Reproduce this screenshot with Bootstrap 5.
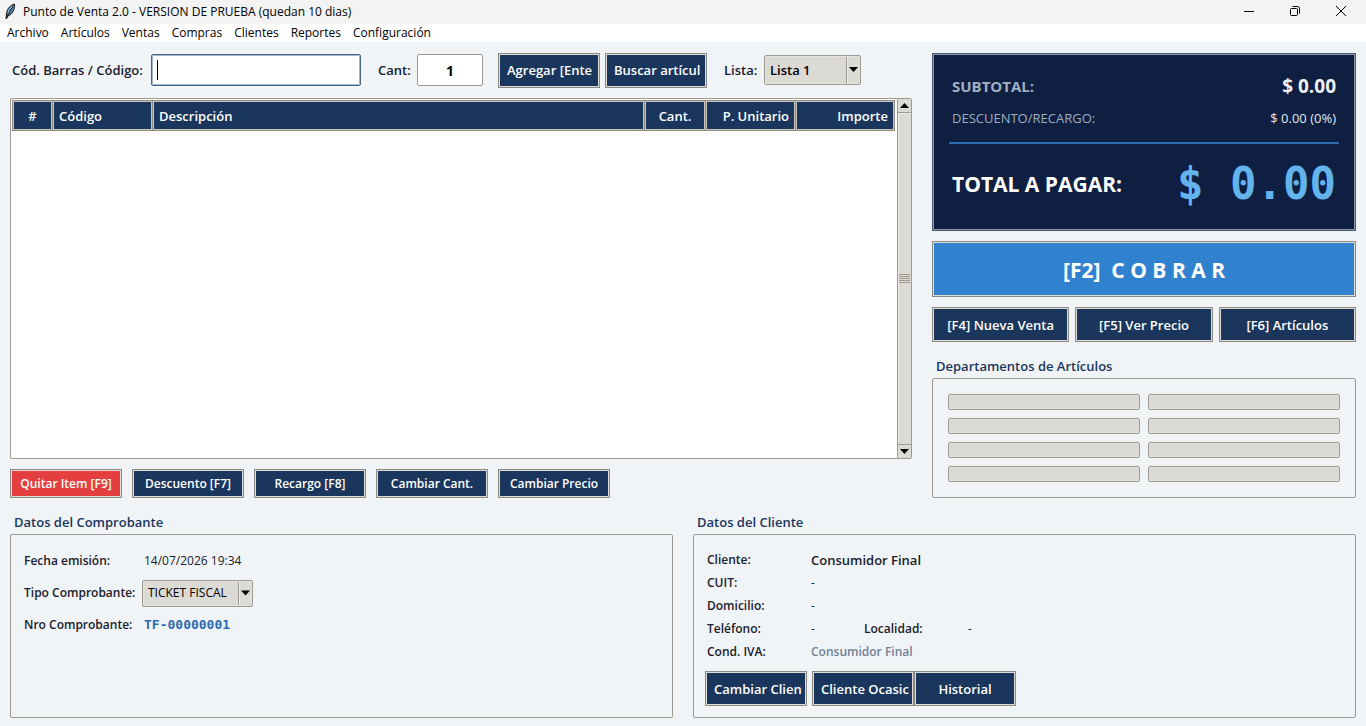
<!DOCTYPE html>
<html lang="es">
<head>
<meta charset="utf-8">
<meta name="viewport" content="width=device-width, initial-scale=1">
<title>Punto de Venta 2.0</title>
<link href="https://cdn.jsdelivr.net/npm/bootstrap@5.3.0/dist/css/bootstrap.min.css" rel="stylesheet">
<style>
:root { --navy: #1a365d; --edge: #9e9a91; --face: #dcdad5; --light: #eeebe7; }
body { font: 400 12px/16px "Open Sans", "Noto Sans", sans-serif; background: #f0f4f7; color: #1a202c; }
.strong13 { font-size: 13px; font-weight: 600; line-height: 18px; }
.strong12 { font-size: 12px; font-weight: 600; }

/* window chrome */
.titlebar { background: #f3f3f3; height: 24px; padding: 0 2px 0 4px; color: #000; }
.titlebar button { width: 46px; height: 24px; border: 0; background: none; padding: 0 0 4px; }
.caption { margin-left: 5px; }
.menubar { background: #fff; height: 18px; padding: 0 7px; gap: 12px; }
.menubar a { color: #000; text-decoration: none; line-height: 18px; }

/* push buttons */
.key { font-size: 13px; font-weight: 600; line-height: 18px; color: #fff; background: var(--navy); border: 1px solid #8d8a84; border-radius: 0; box-shadow: inset 0 0 0 1px #dedbd6; padding: 0 8px; height: 35px; overflow: hidden; white-space: nowrap; }
.key:hover { background: #2a4a7f; }
.key-small { font-size: 12px; width: 112px; height: 29px; padding: 0 2px; }
.key-wide { width: 102px; }
.key-long { padding-right: 2px; text-align: left; }
.key-red { background: #e53e3e; }
.key-pay { background: #3182ce; font-size: 21px; font-weight: 700; height: 56px; padding-top: 2px; margin-top: 10px; white-space: pre; }

/* entry fields */
.field { height: 32px; border: 1px solid var(--edge); border-radius: 2px; background: #fff; color: #000; }
.field-code { width: 210px; border-color: #4a6984; outline: 1px solid #9fb4c8; outline-offset: -2px; padding: 0 5px; font-size: 17px; caret-color: transparent; background: #fff linear-gradient(#000, #000) 5px center / 1px 20px no-repeat; }
.field-qty { width: 66px; text-align: center; font-weight: 700; font-size: 14px; }
.combo { border: 1px solid var(--edge); border-radius: 2px; color: #000; appearance: none; padding: 0 18px 0 5px; background: var(--face) url("data:image/svg+xml,%3Csvg xmlns='http://www.w3.org/2000/svg' width='14' height='28'%3E%3Cpath d='M.5 0V28' stroke='%239e9a91'/%3E%3Cpath d='M1.500 0V28' stroke='%23eeebe7'/%3E%3Cpath d='M3 11H12L7.500 16Z'/%3E%3C/svg%3E") no-repeat right center; box-shadow: inset 0 0 0 1px #e6e3de; }
.combo-list { width: 97px; height: 30px; font-size: 13px; font-weight: 600; }
.combo-type { width: 111px; height: 27px; font-size: 12px; }
.entry { padding-left: 2px; height: 34px; }
.code-label { width: 139px; white-space: nowrap; }
.qty-label { margin-left: 17px; width: 39px; }
.add-key { margin-left: 15px; }
.find-key { margin-left: 5px; }
.list-label { margin-left: 17px; width: 40px; }

/* item grid */
.desk { padding: 11px 10px 8px; }
.work { gap: 20px; }
.items-area { margin-top: 11px; min-height: 160px; }
.grid-frame { border: 1px solid var(--edge); border-right: 0; border-radius: 2px 0 0 2px; background: #fff; padding: 1px 2px 0 1px; }
.items { table-layout: fixed; border-collapse: separate; border-spacing: 1px; width: 100%; }
.items th { background: var(--navy); color: #fff; font-size: 13px; font-weight: 600; line-height: 18px; height: 29px; padding: 0 5px; border: 1px solid #c9c5bd; outline: 1px solid #8f8b83; white-space: nowrap; }
.vbar { width: 15px; border: 1px solid var(--edge); border-radius: 0 2px 2px 0; background: var(--face); }
.vbar button { height: 14px; padding: 0; border: 0; background: var(--face); line-height: 0; }
.vbar button:first-child { border-bottom: 1px solid var(--edge); }
.vbar button:last-child { border-top: 1px solid var(--edge); }
.thumb { box-shadow: inset 1px 1px var(--light); }
.actions { margin-top: 10px; gap: 10px; }

/* totals and departments */
.side { width: 424px; }
.totals { background: #0f1f41; border: 1px solid #4b5a73; box-shadow: inset 0 0 0 1px #8c96a5; height: 178px; padding: 20px 16px 0; }
.totals dt, .totals dd { margin: 0; padding: 0 3px; }
.totals .sub-label { font-size: 15px; font-weight: 700; line-height: 24px; color: #a0aec0; }
.totals .sub-value { font-size: 19px; font-weight: 700; line-height: 24px; color: #edf2f7; }
.totals .adj-label { font-size: 13px; font-weight: 400; line-height: 18px; color: #a0aec0; }
.totals .adj-value { font-size: 13px; line-height: 18px; color: #e2e8f0; }
.adj-row { padding: 11px 0 15px; }
.rule { height: 2px; background: #2b6cb0; }
.totals .sum-label { font-size: 21px; font-weight: 700; line-height: 28px; color: #fff; }
.totals .sum-value { font: 700 44px/54px "DejaVu Sans Mono", monospace; color: #63b3ed; }
.sum-row { padding-top: 13px; }
.quick { margin: 10px 0 14px; gap: 6px; }
.quick .key { flex: 1 1 0; }
.group-title { font-size: 13px; font-weight: 600; line-height: 20px; color: var(--navy); margin: 0 4px 2px; }
.group-box { border: 1px solid var(--edge); border-radius: 2px; }
.depts { display: grid; grid-template-columns: 1fr 1fr; gap: 8px; padding: 15px; }
.depts button { height: 16px; padding: 0; background: #dadad5; border: 1px solid var(--edge); border-radius: 2px; box-shadow: inset 0 0 0 1px #e3e0db; }

/* receipt and customer */
.lower { gap: 20px; margin-top: 14px; }
.half { flex: 1 1 0; min-width: 0; }
.panel { height: 184px; }
.receipt { display: grid; grid-template-columns: 118px auto; justify-content: start; align-items: center; grid-template-rows: 32px 32px 32px; padding: 10px 13px; }
.receipt span:nth-child(even) { padding-left: 2px; }
.mono { font: 700 13px/18px "DejaVu Sans Mono", monospace; color: #2b6cb0; }
.client { padding: 13px 11px 11px; }
.customer { display: grid; grid-template-columns: 104px 53px 104px auto; justify-content: start; align-items: center; grid-auto-rows: 23px; padding-left: 2px; }
.span-rest { grid-column: span 3; }
.muted { color: #718096; }
.client-keys { gap: 5px; margin-top: 8px; }
</style>
</head>
<body class="d-flex flex-column min-vh-100">
<header>
  <div class="titlebar d-flex align-items-center">
    <svg width="14" height="18" viewBox="0 0 14 18" aria-hidden="true"><path d="M10.500 1C6.500 2 3 5.500 2.500 11L2 15.500 4 13C8.500 11.500 11 6 10.500 1Z" fill="#4d82b4" stroke="#111" stroke-width="1"/><path d="M9 3.500C6.500 6.500 4 10.500 2.500 16" fill="none" stroke="#111"/><path d="M8 3.500C5.500 5.500 4.500 7.500 4 10" fill="none" stroke="#a8cdec"/></svg>
    <span class="caption flex-grow-1">Punto de Venta 2.0 - VERSION DE PRUEBA (quedan 10 dias)</span>
    <button type="button" aria-label="Minimizar"><svg width="12" height="12" viewBox="0 0 12 12"><path d="M1 6.500H11" stroke="#000"/></svg></button>
    <button type="button" aria-label="Restaurar"><svg width="12" height="12" viewBox="0 0 12 12" fill="none" stroke="#000"><rect x="1.500" y="3.500" width="7" height="7" rx="1"/><path d="M3.500 1.500H8.500Q10.500 1.500 10.500 3.500V8.500"/></svg></button>
    <button type="button" aria-label="Cerrar"><svg width="12" height="12" viewBox="0 0 12 12"><path d="M1 1L11 11M11 1L1 11" stroke="#000"/></svg></button>
  </div>
  <nav class="menubar d-flex">
    <a href="#">Archivo</a><a href="#">Artículos</a><a href="#">Ventas</a><a href="#">Compras</a><a href="#">Clientes</a><a href="#">Reportes</a><a href="#">Configuración</a>
  </nav>
</header>

<main class="desk flex-grow-1 d-flex flex-column">
  <div class="work flex-grow-1 d-flex">
    <section class="flex-grow-1 d-flex flex-column">
      <form class="entry d-flex align-items-center">
        <label for="code" class="strong13 code-label">Cód. Barras / Código:</label>
        <input id="code" class="field field-code" type="text" autocomplete="off">
        <label for="qty" class="strong13 qty-label">Cant:</label>
        <input id="qty" class="field field-qty" type="text" value="1">
        <button type="button" class="key key-wide key-long add-key">Agregar [Ente</button>
        <button type="button" class="key key-wide key-long find-key">Buscar artícul</button>
        <label for="list" class="strong13 list-label">Lista:</label>
        <select id="list" class="combo combo-list"><option>Lista 1</option></select>
      </form>
      <div class="items-area d-flex flex-grow-1">
        <div class="grid-frame flex-grow-1">
          <table class="items">
            <colgroup><col style="width:39px"><col style="width:99px"><col><col style="width:60px"><col style="width:89px"><col style="width:98px"></colgroup>
            <thead><tr><th class="text-center">#</th><th>Código</th><th>Descripción</th><th class="text-center">Cant.</th><th class="text-end">P. Unitario</th><th class="text-end">Importe</th></tr></thead>
            <tbody></tbody>
          </table>
        </div>
        <div class="vbar d-flex flex-column">
          <button type="button" aria-label="Subir"><svg width="13" height="13"><path d="M2 9H11L6.500 4Z"/></svg></button>
          <div class="thumb flex-grow-1 d-flex align-items-center justify-content-center"><svg width="11" height="9" stroke="#9e9a91"><path d="M0 .5H11M0 2.500H11M0 4.500H11M0 6.500H11M0 8.500H11"/></svg></div>
          <button type="button" aria-label="Bajar"><svg width="13" height="13"><path d="M2 4H11L6.500 9Z"/></svg></button>
        </div>
      </div>
      <div class="actions d-flex">
        <button type="button" class="key key-small key-red">Quitar Item [F9]</button>
        <button type="button" class="key key-small">Descuento [F7]</button>
        <button type="button" class="key key-small">Recargo [F8]</button>
        <button type="button" class="key key-small">Cambiar Cant.</button>
        <button type="button" class="key key-small">Cambiar Precio</button>
      </div>
    </section>

    <aside class="side d-flex flex-column flex-shrink-0">
      <dl class="totals mb-0">
        <div class="d-flex justify-content-between"><dt class="sub-label">SUBTOTAL:</dt><dd class="sub-value">$ 0.00</dd></div>
        <div class="adj-row d-flex justify-content-between"><dt class="adj-label">DESCUENTO/RECARGO:</dt><dd class="adj-value">$ 0.00 (0%)</dd></div>
        <div class="rule"></div>
        <div class="sum-row d-flex justify-content-between align-items-center"><dt class="sum-label">TOTAL A PAGAR:</dt><dd class="sum-value">$ 0.00</dd></div>
      </dl>
      <button type="button" class="key key-pay">[F2]  C O B R A R</button>
      <div class="quick d-flex">
        <button type="button" class="key">[F4] Nueva Venta</button>
        <button type="button" class="key">[F5] Ver Precio</button>
        <button type="button" class="key">[F6] Artículos</button>
      </div>
      <h2 class="group-title">Departamentos de Artículos</h2>
      <div class="group-box depts flex-grow-1 align-content-start">
        <button type="button" aria-label="Departamento 1"></button><button type="button" aria-label="Departamento 2"></button>
        <button type="button" aria-label="Departamento 3"></button><button type="button" aria-label="Departamento 4"></button>
        <button type="button" aria-label="Departamento 5"></button><button type="button" aria-label="Departamento 6"></button>
        <button type="button" aria-label="Departamento 7"></button><button type="button" aria-label="Departamento 8"></button>
      </div>
    </aside>
  </div>

  <div class="lower d-flex">
    <section class="half">
      <h2 class="group-title">Datos del Comprobante</h2>
      <div class="group-box panel receipt align-content-start">
        <span class="strong12">Fecha emisión:</span><span>14/07/2026 19:34</span>
        <label for="type" class="strong12">Tipo Comprobante:</label><select id="type" class="combo combo-type"><option>TICKET FISCAL</option></select>
        <span class="strong12">Nro Comprobante:</span><span class="mono">TF-00000001</span>
      </div>
    </section>
    <section class="half">
      <h2 class="group-title">Datos del Cliente</h2>
      <div class="group-box panel client">
        <div class="customer">
          <span class="strong12">Cliente:</span><span class="strong13 span-rest">Consumidor Final</span>
          <span class="strong12">CUIT:</span><span class="span-rest">-</span>
          <span class="strong12">Domicilio:</span><span class="span-rest">-</span>
          <span class="strong12">Teléfono:</span><span>-</span><span class="strong12">Localidad:</span><span>-</span>
          <span class="strong12">Cond. IVA:</span><span class="strong12 muted span-rest">Consumidor Final</span>
        </div>
        <div class="client-keys d-flex">
          <button type="button" class="key key-wide key-long">Cambiar Clien</button>
          <div class="d-flex">
            <button type="button" class="key key-wide key-long">Cliente Ocasic</button>
            <button type="button" class="key key-wide">Historial</button>
          </div>
        </div>
      </div>
    </section>
  </div>
</main>
<script src="https://cdn.jsdelivr.net/npm/bootstrap@5.3.0/dist/js/bootstrap.bundle.min.js"></script>
</body>
</html>
